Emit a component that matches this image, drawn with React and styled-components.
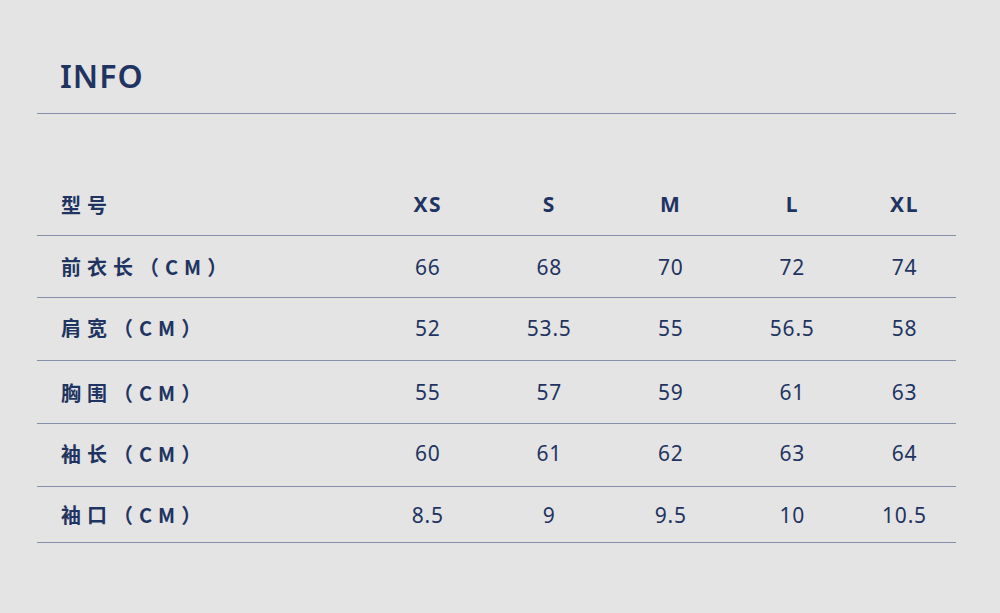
import styled, { createGlobalStyle } from 'styled-components';

const GlobalStyle = createGlobalStyle`
  html, body {
    margin: 0;
    padding: 0;
    background: #e4e4e4;
  }
  body {
    font-family: 'Noto Sans', 'Noto Sans CJK SC', sans-serif;
    color: #1f3461;
  }
`;

const Page = styled.div`
  width: 1000px;
  height: 613px;
  background: #e4e4e4;
  padding-left: 37px;
  box-sizing: border-box;
`;

const Title = styled.h1`
  margin: 0;
  width: 919px;
  height: 114px;
  box-sizing: border-box;
  padding: 55px 0 0 23px;
  line-height: 42px;
  font-size: 32px;
  font-weight: 600;
  letter-spacing: 1px;
  border-bottom: 1px solid #8590ab;
`;

const Table = styled.div`
  width: 919px;
  margin-top: 61px;
`;

const Row = styled.div`
  display: grid;
  grid-template-columns: 330px repeat(4, 121.5px) 1fr;
  align-items: center;
  height: ${(p) => p.$h}px;
  border-bottom: 1px solid #8590ab;
  box-sizing: border-box;
  padding-bottom: ${(p) => p.$pb || 0}px;
`;

const Label = styled.div`
  padding-left: 24px;
  font-family: 'Noto Sans CJK SC', 'Noto Sans', sans-serif;
  font-size: 20px;
  font-weight: 700;
  letter-spacing: 6px;
`;

const Cell = styled.div`
  text-align: center;
  font-size: 21px;
  font-weight: ${(p) => (p.$head ? 700 : 400)};
  letter-spacing: ${(p) => (p.$head ? '1.5px' : '0.8px')};
`;

const sizes = ['XS', 'S', 'M', 'L', 'XL'];

const rows = [
  { label: '前衣长（CM）', values: ['66', '68', '70', '72', '74'], h: 62 },
  { label: '肩宽（CM）', values: ['52', '53.5', '55', '56.5', '58'], h: 63, pb: 3 },
  { label: '胸围（CM）', values: ['55', '57', '59', '61', '63'], h: 63 },
  { label: '袖长（CM）', values: ['60', '61', '62', '63', '64'], h: 63, pb: 4 },
  { label: '袖口（CM）', values: ['8.5', '9', '9.5', '10', '10.5'], h: 56 },
];

const App = () => {
  return (
    <Page>
      <GlobalStyle />
      <Title>INFO</Title>
      <Table>
        <Row $h={61} $pb={2}>
          <Label>型号</Label>
          {sizes.map((s) => (
            <Cell $head key={s}>
              {s}
            </Cell>
          ))}
        </Row>
        {rows.map((r) => (
          <Row key={r.label} $h={r.h} $pb={r.pb}>
            <Label>{r.label}</Label>
            {r.values.map((v, i) => (
              <Cell key={i}>{v}</Cell>
            ))}
          </Row>
        ))}
      </Table>
    </Page>
  );
};

export default App;
